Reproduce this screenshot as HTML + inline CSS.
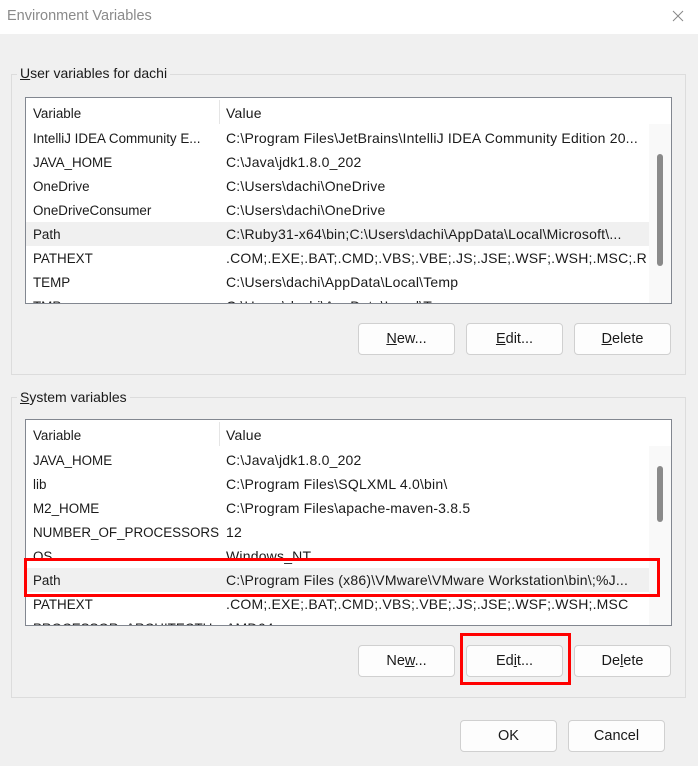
<!DOCTYPE html>
<html><head><style>
*{margin:0;padding:0;box-sizing:border-box}
body{width:698px;height:766px;background:#f0f0f0;font-family:"Liberation Sans",sans-serif;font-size:14px;color:#1a1a1a;position:relative;overflow:hidden}
.a{position:absolute}
.title{left:0;top:0;width:698px;height:34px;background:#fff}
.title span{position:absolute;left:7px;top:8px;font-size:14.5px;color:#8a8a8a}
.grp{border:1px solid #dcdcdc}
.lbl{background:#f0f0f0;padding:0 3px;font-size:14px}
.list{background:#fff;border:1px solid #828790;overflow:hidden}
.row{position:absolute;left:0;width:624px;height:24px;line-height:24px;white-space:nowrap}
.row .v{position:absolute;left:7px;top:1px;width:186px;overflow:hidden;font-size:13.4px}
.row .w{position:absolute;left:200px;top:0;width:422px;overflow:hidden;font-size:14px;letter-spacing:0.2px}
.sel{background:#f0f0f0}
.sb{position:absolute;right:0;top:0;width:22px;height:100%;background:#f9f9f9}
.th{position:absolute;left:8px;width:6px;background:#8a8a8a;border-radius:3px}
.btn{position:absolute;width:97px;height:32px;background:#fdfdfd;border:1px solid #d0d0d0;border-radius:4px;text-align:center;line-height:30px;font-size:14.5px}
.red{position:absolute;border:3px solid #f00}
</style></head><body>
<div class="a title"><span>Environment Variables</span>
<svg class="a" style="left:672px;top:10px" width="12" height="12"><path d="M1 1L11 11M11 1L1 11" stroke="#888" stroke-width="1"/></svg></div>

<div class="a grp" style="left:11px;top:74px;width:675px;height:301px"></div>
<div class="a lbl" style="left:17px;top:65px"><u>U</u>ser variables for dachi</div>
<div class="a list" style="left:25px;top:97px;width:647px;height:207px">
 <div class="row" style="top:3px"><span class="v">Variable</span><span class="w">Value</span></div>
 <div class="a" style="left:193px;top:2px;width:1px;height:24px;background:#e5e5e5"></div>
 <div class="row" style="top:28px"><span class="v">IntelliJ IDEA Community E...</span><span class="w">C:\Program Files\JetBrains\IntelliJ IDEA Community Edition 20...</span></div>
 <div class="row" style="top:52px"><span class="v">JAVA_HOME</span><span class="w">C:\Java\jdk1.8.0_202</span></div>
 <div class="row" style="top:76px"><span class="v">OneDrive</span><span class="w">C:\Users\dachi\OneDrive</span></div>
 <div class="row" style="top:100px"><span class="v">OneDriveConsumer</span><span class="w">C:\Users\dachi\OneDrive</span></div>
 <div class="row sel" style="top:124px"><span class="v">Path</span><span class="w">C:\Ruby31-x64\bin;C:\Users\dachi\AppData\Local\Microsoft\...</span></div>
 <div class="row" style="top:148px"><span class="v">PATHEXT</span><span class="w">.COM;.EXE;.BAT;.CMD;.VBS;.VBE;.JS;.JSE;.WSF;.WSH;.MSC;.RB;.RB...</span></div>
 <div class="row" style="top:172px"><span class="v">TEMP</span><span class="w">C:\Users\dachi\AppData\Local\Temp</span></div>
 <div class="row" style="top:196px"><span class="v">TMP</span><span class="w">C:\Users\dachi\AppData\Local\Temp</span></div>
 <div class="sb" style="top:26px;height:180px"><div class="th" style="top:30px;height:112px"></div></div>
</div>
<div class="btn" style="left:358px;top:323px"><u>N</u>ew...</div>
<div class="btn" style="left:466px;top:323px"><u>E</u>dit...</div>
<div class="btn" style="left:574px;top:323px"><u>D</u>elete</div>

<div class="a grp" style="left:11px;top:397px;width:675px;height:301px"></div>
<div class="a lbl" style="left:17px;top:389px"><u>S</u>ystem variables</div>
<div class="a list" style="left:25px;top:419px;width:647px;height:207px">
 <div class="row" style="top:3px"><span class="v">Variable</span><span class="w">Value</span></div>
 <div class="a" style="left:193px;top:2px;width:1px;height:24px;background:#e5e5e5"></div>
 <div class="row" style="top:28px"><span class="v">JAVA_HOME</span><span class="w">C:\Java\jdk1.8.0_202</span></div>
 <div class="row" style="top:52px"><span class="v">lib</span><span class="w">C:\Program Files\SQLXML 4.0\bin\</span></div>
 <div class="row" style="top:76px"><span class="v">M2_HOME</span><span class="w">C:\Program Files\apache-maven-3.8.5</span></div>
 <div class="row" style="top:100px"><span class="v">NUMBER_OF_PROCESSORS</span><span class="w">12</span></div>
 <div class="row" style="top:124px"><span class="v">OS</span><span class="w">Windows_NT</span></div>
 <div class="row sel" style="top:148px"><span class="v">Path</span><span class="w">C:\Program Files (x86)\VMware\VMware Workstation\bin\;%J...</span></div>
 <div class="row" style="top:172px"><span class="v">PATHEXT</span><span class="w">.COM;.EXE;.BAT;.CMD;.VBS;.VBE;.JS;.JSE;.WSF;.WSH;.MSC</span></div>
 <div class="row" style="top:196px"><span class="v">PROCESSOR_ARCHITECTU...</span><span class="w">AMD64</span></div>
 <div class="sb" style="top:26px;height:180px"><div class="th" style="top:20px;height:56px"></div></div>
</div>
<div class="red" style="left:24px;top:558px;width:636px;height:39px"></div>
<div class="btn" style="left:358px;top:645px">Ne<u>w</u>...</div>
<div class="btn" style="left:466px;top:645px">Ed<u>i</u>t...</div>
<div class="btn" style="left:574px;top:645px">De<u>l</u>ete</div>
<div class="red" style="left:460px;top:633px;width:111px;height:52px"></div>

<div class="btn" style="left:460px;top:720px">OK</div>
<div class="btn" style="left:568px;top:720px">Cancel</div>
</body></html>
